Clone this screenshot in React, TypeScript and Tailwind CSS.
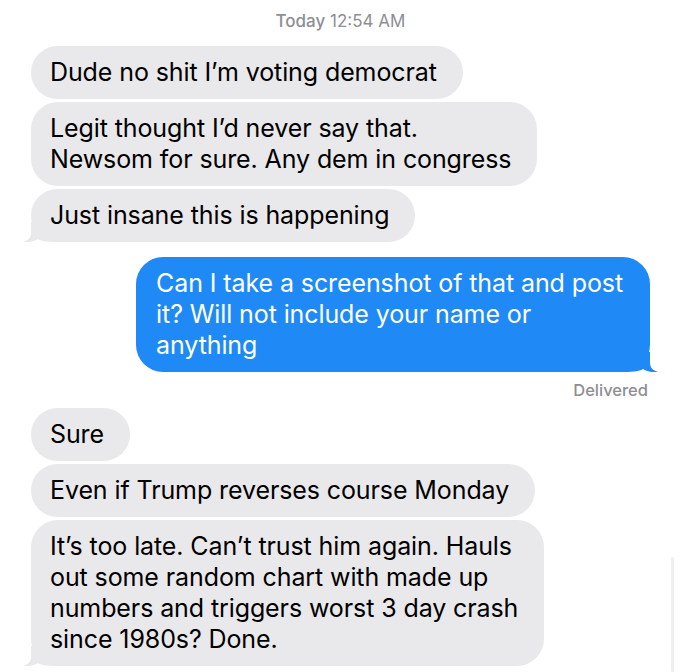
import React from "react";

type Msg = {
  from: "them" | "me";
  lines: string[];
  tail?: boolean;
  gap?: string;
};

const messages: Msg[] = [
  { from: "them", lines: ["Dude no shit I’m voting democrat"], gap: "mt-[14px]" },
  { from: "them", lines: ["Legit thought I’d never say that.", "Newsom for sure. Any dem in congress"], gap: "mt-[3px]" },
  { from: "them", lines: ["Just insane this is happening"], tail: true, gap: "mt-[3px]" },
  {
    from: "me",
    lines: ["Can I take a screenshot of that and post", "it? Will not include your name or", "anything"],
    tail: true,
    gap: "mt-[15px]",
  },
  { from: "them", lines: ["Sure"], gap: "mt-[8px]" },
  { from: "them", lines: ["Even if Trump reverses course Monday"], gap: "mt-[3px]" },
  {
    from: "them",
    lines: [
      "It’s too late. Can’t trust him again. Hauls",
      "out some random chart with made up",
      "numbers and triggers worst 3 day crash",
      "since 1980s? Done.",
    ],
    tail: true,
    gap: "mt-[3px]",
  },
];

function Tail({ side, color }: { side: "left" | "right"; color: string }) {
  return (
    <svg
      width="40"
      height="20"
      viewBox="0 0 40 20"
      className={
        side === "left"
          ? "absolute -left-[8px] bottom-0"
          : "absolute -right-[8px] bottom-0 -scale-x-100"
      }
    >
      <path
        d="M8 0 V11 C8 15.5 5 18.5 0 20 C6 20.6 11 19.6 15 17 C18 19 23 20 34 20 H40 V0 Z"
        fill={color}
      />
    </svg>
  );
}

function Bubble({ msg }: { msg: Msg }) {
  const mine = msg.from === "me";
  return (
    <div className={`flex ${mine ? "justify-end" : "justify-start"} ${msg.gap ?? ""}`}>
      <div
        className={`relative rounded-[27px] py-[11px] text-[25px] leading-[31px] tracking-[-0.1px] ${
          mine ? "bg-[#1f8af6] text-white pl-[20px] pr-[27px]" : "bg-[#e9e9eb] text-black pl-[19px] pr-[26px]"
        }`}
      >
        {msg.tail && <Tail side={mine ? "right" : "left"} color={mine ? "#1f8af6" : "#e9e9eb"} />}
        <div className="relative">
          {msg.lines.map((l, i) => (
            <div key={i} className="whitespace-nowrap">
              {l}
            </div>
          ))}
        </div>
      </div>
    </div>
  );
}

export default function App() {
  return (
    <div className="relative w-[680px] h-[672px] overflow-hidden bg-white font-['Inter',sans-serif]">
      <div className="flex flex-col pl-[31px] pr-[30px]">
        <div className="pt-[11px] text-center text-[17px] leading-[21px] text-[#8e8e93]">
          <span className="font-medium">Today</span> 12:54 AM
        </div>
        {messages.slice(0, 4).map((m, i) => (
          <Bubble key={i} msg={m} />
        ))}
        <div className="mt-[8px] pr-[2px] text-right text-[16.5px] leading-[20px] font-medium text-[#8e8e93]">
          Delivered
        </div>
        {messages.slice(4).map((m, i) => (
          <Bubble key={i} msg={m} />
        ))}
      </div>
      <div className="absolute right-[6px] top-[557px] bottom-0 w-[3px] rounded-full bg-[#eeeeee]" />
    </div>
  );
}
